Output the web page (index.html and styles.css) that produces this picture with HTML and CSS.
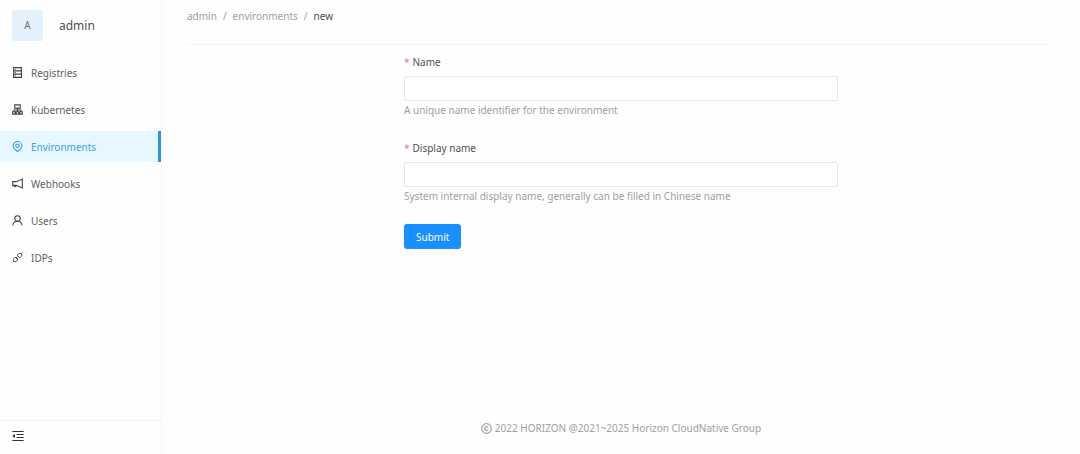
FILE: index.html
```html
<!DOCTYPE html>
<html lang="en">
<head>
<meta charset="utf-8">
<meta name="viewport" content="width=device-width, initial-scale=1">
<title>New environment</title>
<link rel="stylesheet" href="styles.css">
</head>
<body>
<aside class="sidebar">
  <div class="account">
    <span class="avatar">A</span>
    <span class="account-name">admin</span>
  </div>
  <nav class="menu">
    <a class="menu-item" href="#registries">
      <svg class="icon" viewBox="0 0 12 12"><path d="M1.700 .7h8.600v10.600H1.700zM1.700 4.200h8.600M1.700 7.800h8.600M3.200 2.500h1M3.200 6h1M3.200 9.500h1"/></svg>
      Registries</a>
    <a class="menu-item" href="#kubernetes">
      <svg class="icon" viewBox="0 0 12 12"><path d="M3 1h6v3.500H3zM6 4.500v4M2.200 8.500V6.500h7.600v2M.7 8.500h2.800v2.500H.7zM4.600 8.500h2.800v2.500H4.600zM8.500 8.500h2.800v2.500H8.500z"/></svg>
      Kubernetes</a>
    <a class="menu-item menu-item-active" href="#environments" aria-current="page">
      <svg class="icon" viewBox="0 0 12 12"><path d="M6 11.400C3.300 9.500 1.200 7.600 1.200 5.200A4.800 4.600 0 0 1 10.800 5.200C10.800 7.600 8.700 9.500 6 11.400z"/><circle cx="6" cy="5.200" r="1.900"/></svg>
      Environments</a>
    <a class="menu-item" href="#webhooks">
      <svg class="icon" viewBox="0 0 12 12"><path d="M11.200 1.200v9.600L4.600 8H.8V4h3.800zM1.800 8a1.400 1.400 0 0 0 2.800 0"/></svg>
      Webhooks</a>
    <a class="menu-item" href="#users">
      <svg class="icon" viewBox="0 0 12 12"><circle cx="6" cy="3.800" r="3"/><path d="M1 11.500C1.100 8.700 3.300 6.800 6 6.800S10.900 8.700 11 11.500"/></svg>
      Users</a>
    <a class="menu-item" href="#idps">
      <svg class="icon icon-fine" viewBox="0 0 12 12"><path d="M5.600 3.400L7 2A2.100 2.100 0 0 1 10 5L8.600 6.400zM3.400 5.600L2 7A2.100 2.100 0 0 0 5 10L6.400 8.600zM10 2L11.500 .5M2 10L.5 11.500M4.300 6.500L5.600 5.200M5.500 7.700L6.800 6.400"/></svg>
      IDPs</a>
  </nav>
  <button class="collapse" type="button" aria-label="Collapse menu">
    <svg class="icon icon-fine" viewBox="0 0 12 12"><path d="M.3 1.500h11.400M4.500 4.500h7.200M4.500 7.500h7.200M.3 10.500h11.400"/><path class="solid" d="M.2 6L3 4v4z"/></svg>
  </button>
</aside>
<div class="page">
  <nav class="breadcrumb" aria-label="Breadcrumb">
    <a href="#admin">admin</a><span class="separator">/</span><a href="#environments">environments</a><span class="separator">/</span><span class="current">new</span>
  </nav>
  <main class="content">
    <form class="form">
      <div class="field">
        <label class="label" for="name"><span class="required">*</span>Name</label>
        <input class="input" id="name" type="text" required aria-describedby="name-help">
        <p class="help" id="name-help">A unique name identifier for the environment</p>
      </div>
      <div class="field">
        <label class="label" for="display-name"><span class="required">*</span>Display name</label>
        <input class="input" id="display-name" type="text" required aria-describedby="display-help">
        <p class="help" id="display-help">System internal display name, generally can be filled in Chinese name</p>
      </div>
      <button class="submit" type="submit">Submit</button>
    </form>
  </main>
  <footer class="footer">
    <svg class="icon" viewBox="0 0 12 12"><circle cx="6" cy="6" r="5.300"/><path d="M7.900 4.800A2.200 2.200 0 1 0 7.900 7.200"/></svg>
    2022 HORIZON @2021~2025 Horizon CloudNative Group
  </footer>
</div>
</body>
</html>
```

FILE: styles.css
```css
* {
  box-sizing: border-box;
}

body {
  display: flex;
  min-height: 100vh;
  margin: 0;
  background: #fefefe;
  color: #606060;
  font: 10px/16px "Noto Sans", "Open Sans", sans-serif;
}

a {
  color: inherit;
  text-decoration: none;
}

.icon {
  width: 11px;
  height: 11px;
  flex: none;
  fill: none;
  stroke: currentColor;
  stroke-width: 1.2;
}

.icon-fine {
  stroke-width: 1;
}

.solid {
  fill: currentColor;
  stroke: none;
}

.sidebar {
  display: flex;
  flex-direction: column;
  flex: none;
  width: 162px;
  border-right: 1px solid #f5f5f5;
}

.account {
  display: flex;
  align-items: center;
  gap: 16px;
  padding: 10px 12px 16px;
  color: #505050;
  font-size: 12px;
}

.avatar {
  width: 31px;
  border-radius: 2px;
  background: #e3f1fd;
  color: #707070;
  font-size: 10px;
  line-height: 31px;
  text-align: center;
}

.menu {
  display: flex;
  flex-direction: column;
  flex: 1;
  gap: 6px;
}

.menu-item {
  display: flex;
  align-items: center;
  gap: 8px;
  height: 31px;
  padding: 0 12px;
}

.menu-item .icon {
  color: #444;
}

.menu-item-active {
  border-right: 3px solid #2f93e0;
  background: #e6f7ff;
  color: #43a0dc;
}

.menu-item-active .icon {
  color: inherit;
}

.collapse {
  display: flex;
  align-items: center;
  height: 34px;
  padding: 0 12px 4px;
  border: 0;
  border-top: 1px solid #f5f5f5;
  background: none;
  color: #333;
}

.collapse .icon {
  width: 12px;
  height: 12px;
}

.page {
  display: flex;
  flex-direction: column;
  flex: 1;
  padding: 8px 25px 18px;
}

.breadcrumb {
  margin-right: 3px;
  padding-bottom: 20px;
  border-bottom: 1px solid #f5f5f5;
  color: #a0a0a0;
}

.separator {
  margin: 0 6px;
}

.current {
  color: #4c4c4c;
}

.content {
  flex: 1;
}

.form {
  width: 50%;
  margin: 0 auto;
  padding-top: 9px;
}

.field {
  margin-bottom: 22px;
}

.field:last-of-type {
  margin-bottom: 20px;
}

.label {
  display: block;
  margin-bottom: 6px;
  color: #505050;
}

.required {
  margin-right: 3px;
  color: #e88080;
}

.input {
  display: block;
  width: 100%;
  height: 25px;
  padding: 0 8px;
  border: 1px solid #e6e6e6;
  border-radius: 2px;
  background: #fff;
  font: inherit;
}

.help {
  margin: 1px 0 0;
  color: #a0a0a0;
}

.submit {
  height: 25px;
  padding: 0 12px;
  border: 0;
  border-radius: 3px;
  background: #1890ff;
  color: #fff;
  font: inherit;
}

.footer {
  display: flex;
  align-items: center;
  justify-content: center;
  gap: 3px;
  color: #a0a0a0;
}
```
